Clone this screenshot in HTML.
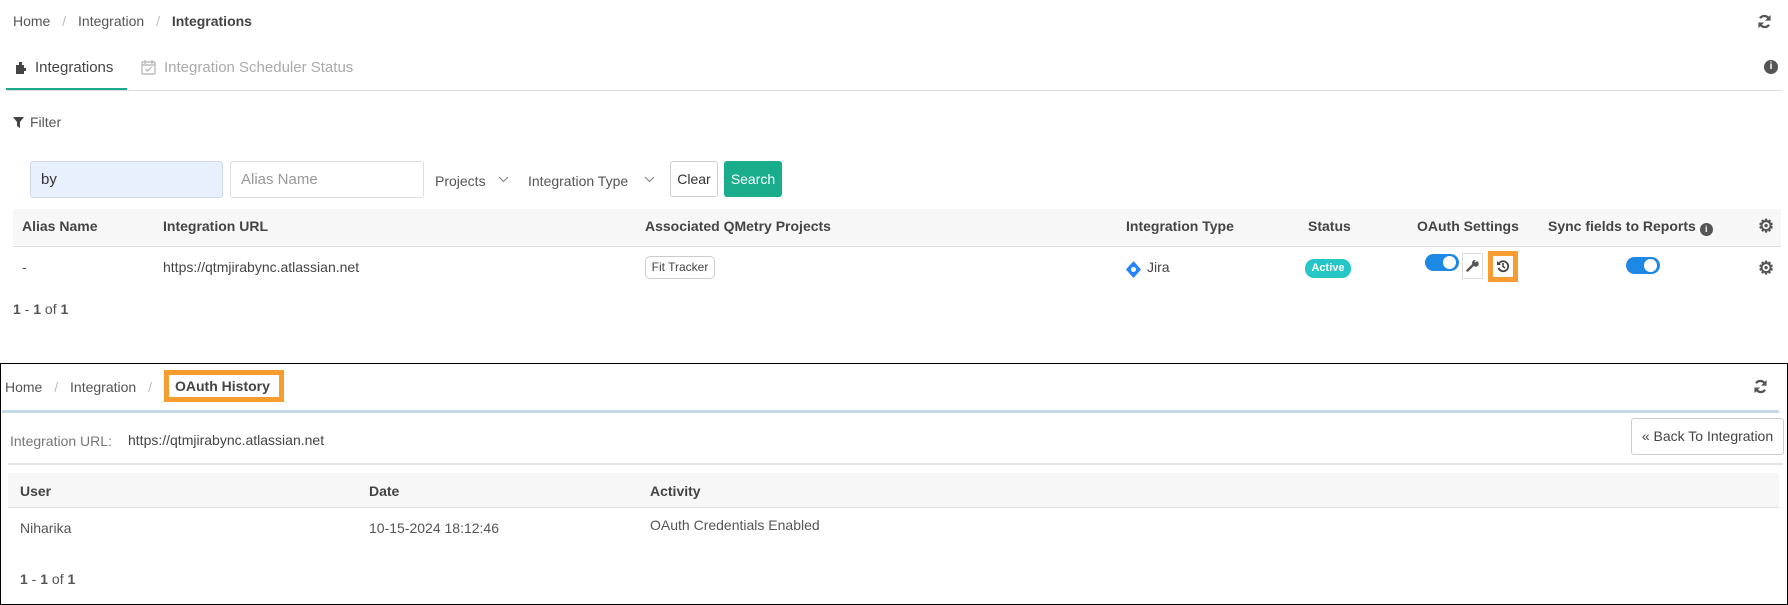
<!DOCTYPE html>
<html><head><meta charset="utf-8">
<style>
*{box-sizing:border-box;margin:0;padding:0}
body{width:1788px;height:605px;background:#fff;font-family:"Liberation Sans",sans-serif;font-size:14px;color:#555;position:relative;overflow:hidden}
.a{position:absolute;white-space:nowrap}
.b{font-weight:bold;color:#444}
.tog{position:absolute;width:34px;height:17px;border-radius:9px;background:#1e88e5}
.tog:after{content:"";position:absolute;right:3px;top:2px;width:13px;height:13px;border-radius:50%;background:#fff}
.gear{position:absolute;color:#555;font-size:18px;font-weight:bold}
</style></head><body>
<div class="a" style="left:13px;top:13px">Home <span style="color:#bbb;margin:0 8px">/</span> Integration <span style="color:#bbb;margin:0 8px">/</span> <span class="b">Integrations</span></div>
<svg class="a" style="left:1757px;top:14px" width="15" height="15" viewBox="0 0 16 16"><path d="M13 6A5.5 5.5 0 0 0 3.2 4.5M3 10a5.5 5.5 0 0 0 9.8 1.5" stroke="#555" stroke-width="2.4" fill="none"/><path d="M14.5 1v6h-6zM1.5 15V9h6z" fill="#555"/></svg>
<svg class="a" style="left:15px;top:60px" width="15" height="14" viewBox="0 0 15 14"><path d="M1 5h3V2h3v3h2v3h2v3H9v3H1z" fill="#444"/></svg>
<div class="a" style="left:35px;top:59px;font-size:15px;color:#444">Integrations</div>
<svg class="a" style="left:141px;top:59px" width="15" height="16" viewBox="0 0 15 16"><rect x="1" y="3" width="13" height="12" rx="1" stroke="#bbb" stroke-width="1.4" fill="none"/><path d="M4 1v4M11 1v4M1 6h13M4.5 10l2 2 4-4" stroke="#bbb" stroke-width="1.4" fill="none"/></svg>
<div class="a" style="left:164px;top:59px;font-size:15px;color:#aaa">Integration Scheduler Status</div>
<div class="a" style="left:6px;top:88px;width:121px;height:3px;background:#1aa98a"></div>
<div class="a" style="left:6px;top:90px;width:1776px;height:1px;background:#ddd"></div>
<div class="a" style="left:1764px;top:60px;width:14px;height:14px;border-radius:50%;background:#555;color:#fff;font-size:10px;font-weight:bold;text-align:center;line-height:14px">i</div>
<svg class="a" style="left:13px;top:117px" width="11" height="11" viewBox="0 0 11 11"><path d="M0 0h11L7 5v6L4 9V5z" fill="#444"/></svg>
<div class="a" style="left:30px;top:114px;font-size:14px">Filter</div>
<div class="a" style="left:30px;top:161px;width:193px;height:37px;background:#e8f0fe;border:1px solid #cfd8e6;border-radius:3px;padding:9px 10px;color:#333;font-size:15px">by</div>
<div class="a" style="left:230px;top:161px;width:194px;height:37px;border:1px solid #ddd;border-radius:3px;padding:9px 10px;color:#999;font-size:15px">Alias Name</div>
<div class="a" style="left:435px;top:173px;font-size:14px">Projects</div>
<svg class="a" style="left:498px;top:176px" width="11" height="7" viewBox="0 0 11 7"><path d="M1 1l4.5 4.5L10 1" stroke="#888" stroke-width="1.2" fill="none"/></svg>
<div class="a" style="left:528px;top:173px;font-size:14px">Integration Type</div>
<svg class="a" style="left:644px;top:176px" width="11" height="7" viewBox="0 0 11 7"><path d="M1 1l4.5 4.5L10 1" stroke="#888" stroke-width="1.2" fill="none"/></svg>
<div class="a" style="left:670px;top:161px;width:48px;height:36px;border:1px solid #ccc;border-radius:3px;text-align:center;line-height:34px;color:#333">Clear</div>
<div class="a" style="left:724px;top:161px;width:58px;height:36px;background:#1aad8c;border-radius:3px;text-align:center;line-height:36px;color:#fff">Search</div>
<div class="a" style="left:13px;top:209px;width:1768px;height:38px;background:#f7f7f7;border-bottom:1px solid #ddd"></div>
<div class="a b" style="left:22px;top:218px">Alias Name</div>
<div class="a b" style="left:163px;top:218px">Integration URL</div>
<div class="a b" style="left:645px;top:218px">Associated QMetry Projects</div>
<div class="a b" style="left:1126px;top:218px">Integration Type</div>
<div class="a b" style="left:1308px;top:218px">Status</div>
<div class="a b" style="left:1417px;top:218px">OAuth Settings</div>
<div class="a b" style="left:1548px;top:218px">Sync fields to Reports <span style="display:inline-block;width:13px;height:13px;border-radius:50%;background:#555;color:#fff;font-size:9px;text-align:center;line-height:13px;vertical-align:-1px">i</span></div>
<div class="gear" style="left:1758px;top:216px">&#9881;</div>
<div class="a" style="left:22px;top:259px">-</div>
<div class="a" style="left:163px;top:259px;color:#444">https://qtmjirabync.atlassian.net</div>
<div class="a" style="left:645px;top:256px;width:70px;height:23px;border:1px solid #ccc;border-radius:5px;font-size:12px;text-align:center;line-height:21px;color:#444">Fit Tracker</div>
<svg class="a" style="left:1126px;top:261px" width="15" height="17" viewBox="0 0 15 17"><path d="M7.5 0L15 8.5 7.5 17 0 8.5z" fill="#2684ff"/><circle cx="7.5" cy="8.5" r="2.5" fill="#fff"/></svg>
<div class="a" style="left:1147px;top:259px;color:#444">Jira</div>
<div class="a" style="left:1305px;top:259px;width:46px;height:19px;background:#26c6c6;border-radius:9px;color:#fff;font-size:11px;font-weight:bold;text-align:center;line-height:19px">Active</div>
<div class="tog" style="left:1425px;top:254px"></div>
<div class="a" style="left:1462px;top:253px;width:21px;height:26px;border:1px solid #ddd"></div>
<svg class="a" style="left:1466px;top:259px" width="13" height="13" viewBox="0 0 13 13"><path d="M1.5 11.5l6-6" stroke="#555" stroke-width="2.4" stroke-linecap="round"/><path d="M7 6a3 3 0 1 0 4-4l-1.5 1.5-1-1L10 1a3 3 0 0 0-3 5z" fill="#555"/></svg>
<div class="a" style="left:1488px;top:251px;width:30px;height:31px;background:#f89c30;padding:5px"><div style="background:#fff;width:20px;height:21px"></div></div>
<svg class="a" style="left:1496px;top:259px" width="14" height="14" viewBox="0 0 14 14"><path d="M3 4.5A5 5 0 1 1 2.5 9" stroke="#444" stroke-width="1.8" fill="none"/><path d="M1 2v4h4z" fill="#444"/><path d="M7 4v3.5l2 1.5" stroke="#444" stroke-width="1.6" fill="none"/></svg>
<div class="tog" style="left:1626px;top:257px"></div>
<div class="gear" style="left:1758px;top:258px">&#9881;</div>
<div class="a" style="left:13px;top:301px;color:#555"><b>1</b> - <b>1</b> of <b>1</b></div>
<div class="a" style="left:0;top:363px;width:1788px;height:242px;border:1px solid #000"></div>
<div class="a" style="left:5px;top:379px">Home <span style="color:#bbb;margin:0 8px">/</span> Integration <span style="color:#bbb;margin:0 8px">/</span></div>
<div class="a b" style="left:164px;top:370px;width:120px;height:32px;border:5px solid #f89c30;padding:3px 6px;line-height:17px">OAuth History</div>
<div class="a" style="left:2px;top:410px;width:1777px;height:3px;background:#c5d9e6"></div>
<svg class="a" style="left:1753px;top:379px" width="15" height="15" viewBox="0 0 16 16"><path d="M13 6A5.5 5.5 0 0 0 3.2 4.5M3 10a5.5 5.5 0 0 0 9.8 1.5" stroke="#555" stroke-width="2.4" fill="none"/><path d="M14.5 1v6h-6zM1.5 15V9h6z" fill="#555"/></svg>
<div class="a" style="left:10px;top:433px;color:#777">Integration URL:</div>
<div class="a" style="left:128px;top:432px;color:#444">https://qtmjirabync.atlassian.net</div>
<div class="a" style="left:1631px;top:418px;width:153px;height:37px;border:1px solid #ccc;border-radius:3px;text-align:center;line-height:35px;color:#444">« Back To Integration</div>
<div class="a" style="left:8px;top:463px;width:1775px;height:2px;background:#e6e6e6"></div>
<div class="a" style="left:8px;top:473px;width:1771px;height:35px;background:#f7f7f7;border-bottom:1px solid #ddd"></div>
<div class="a b" style="left:20px;top:483px">User</div>
<div class="a b" style="left:369px;top:483px">Date</div>
<div class="a b" style="left:650px;top:483px">Activity</div>
<div class="a" style="left:20px;top:520px;color:#555">Niharika</div>
<div class="a" style="left:369px;top:520px;color:#555">10-15-2024 18:12:46</div>
<div class="a" style="left:650px;top:517px;color:#555">OAuth Credentials Enabled</div>
<div class="a" style="left:20px;top:571px;color:#555"><b>1</b> - <b>1</b> of <b>1</b></div>
</body></html>
